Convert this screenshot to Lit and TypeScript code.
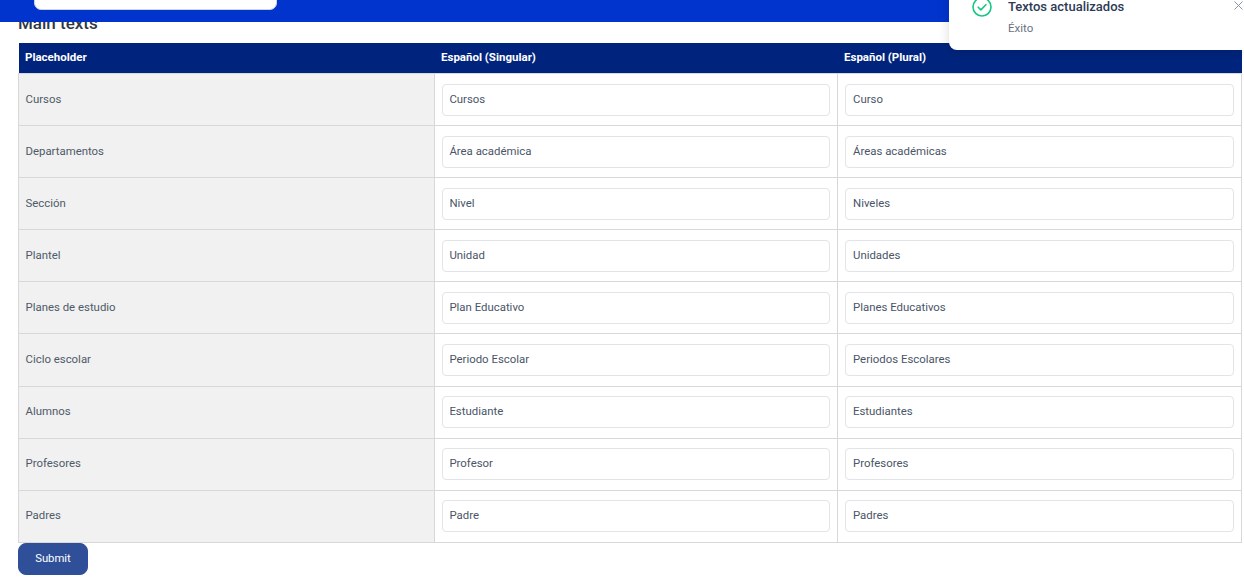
import { LitElement, html, css } from "lit";
import { customElement } from "lit/decorators.js";

const rows: [string, string, string][] = [
  ["Cursos", "Cursos", "Curso"],
  ["Departamentos", "Área académica", "Áreas académicas"],
  ["Sección", "Nivel", "Niveles"],
  ["Plantel", "Unidad", "Unidades"],
  ["Planes de estudio", "Plan Educativo", "Planes Educativos"],
  ["Ciclo escolar", "Periodo Escolar", "Periodos Escolares"],
  ["Alumnos", "Estudiante", "Estudiantes"],
  ["Profesores", "Profesor", "Profesores"],
  ["Padres", "Padre", "Padres"],
];

@customElement("app-root")
export class AppRoot extends LitElement {
  static styles = css`
    :host {
      display: block;
      position: relative;
      width: 1244px;
      height: 588px;
      overflow: hidden;
      background: #fff;
      font-family: Roboto, "Liberation Sans", sans-serif;
      color: #4a5568;
    }
    .topbar {
      position: absolute;
      inset: 0 0 auto 0;
      height: 22px;
      background: #0134cc;
      z-index: 2;
    }
    .search {
      position: absolute;
      left: 34px;
      top: -10px;
      width: 243px;
      height: 20px;
      box-sizing: border-box;
      background: #fff;
      border: 1px solid #cfd4dc;
      border-radius: 7px;
    }
    .content {
      padding: 13px 3px 0 18px;
    }
    h2 {
      margin: 0 0 10px;
      height: 20px;
      font-size: 17px;
      line-height: 20px;
      font-weight: 500;
      color: #2d3748;
    }
    table {
      border-collapse: collapse;
      table-layout: fixed;
      width: 1223px;
      font-size: 11.4px;
    }
    th {
      height: 30px;
      padding: 0 6.5px 1px;
      box-sizing: border-box;
      background: #00247d;
      color: #fff;
      font-size: 11.5px;
      font-weight: 700;
      text-align: left;
    }
    td {
      height: 52px;
      padding: 10.5px 7px 0;
      box-sizing: border-box;
      border: 1px solid #d8d8d8;
      vertical-align: top;
    }
    tbody tr:nth-child(6) td {
      height: 53px;
    }
    tbody tr:nth-child(n + 7) td {
      padding-top: 9.5px;
    }
    td.label {
      padding-left: 6.5px;
      line-height: 30px;
      background: #f1f1f1;
      color: #4f5a68;
    }
    td.mid input {
      padding-left: 6.4px;
    }
    input {
      display: block;
      width: 100%;
      height: 32px;
      box-sizing: border-box;
      padding: 0 7px 2px;
      border: 1px solid #e2e4e8;
      border-radius: 4px;
      background: #fff;
      font: inherit;
      color: #4a5568;
      outline: none;
    }
    .submit {
      display: block;
      width: 70px;
      height: 32px;
      padding: 0;
      border: 1px solid #2f4f9a;
      border-radius: 8px;
      background: #304f99;
      color: #fff;
      font: 400 11.3px Roboto, "Liberation Sans", sans-serif;
    }
    .toast {
      position: absolute;
      top: -10px;
      right: 0;
      width: 295px;
      height: 60px;
      box-sizing: border-box;
      padding: 7px 0 0 23px;
      display: flex;
      gap: 16px;
      background: #fff;
      border-radius: 8px 0 0 8px;
      box-shadow: 0 2px 12px rgba(0, 0, 0, 0.14);
      z-index: 3;
    }
    .toast svg.ok {
      flex: none;
      width: 20px;
      height: 20px;
    }
    .title {
      font-size: 13px;
      line-height: 16px;
      font-weight: 500;
      color: #2d3a55;
      margin-top: 2px;
    }
    .sub {
      font-size: 11.5px;
      line-height: 14px;
      margin-top: 6px;
      color: #6b7280;
    }
    .close {
      position: absolute;
      right: 1px;
      top: 11px;
      width: 9px;
      height: 9px;
    }
  `;

  render() {
    return html`
      <div class="topbar"><div class="search"></div></div>
      <div class="toast">
        <svg class="ok" viewBox="0 0 20 20" fill="none" stroke="#17c683" stroke-width="1.6">
          <circle cx="10" cy="10" r="9"></circle>
          <path d="M6.2 10.2l2.7 2.7 5-5.2" stroke-linecap="round" stroke-linejoin="round"></path>
        </svg>
        <div>
          <div class="title">Textos actualizados</div>
          <div class="sub">Éxito</div>
        </div>
        <svg class="close" viewBox="0 0 9 9" fill="none" stroke="#8a94a6" stroke-width="1">
          <path d="M.5.5l8 8M8.5.5l-8 8"></path>
        </svg>
      </div>
      <div class="content">
        <h2>Main texts</h2>
        <table>
          <colgroup>
            <col style="width:416px" />
            <col style="width:403px" />
            <col style="width:404px" />
          </colgroup>
          <thead>
            <tr>
              <th>Placeholder</th>
              <th>Español (Singular)</th>
              <th>Español (Plural)</th>
            </tr>
          </thead>
          <tbody>
            ${rows.map(
              ([a, b, c]) => html`
                <tr>
                  <td class="label">${a}</td>
                  <td class="mid"><input .value=${b} /></td>
                  <td><input .value=${c} /></td>
                </tr>
              `
            )}
          </tbody>
        </table>
        <button class="submit">Submit</button>
      </div>
    `;
  }
}
